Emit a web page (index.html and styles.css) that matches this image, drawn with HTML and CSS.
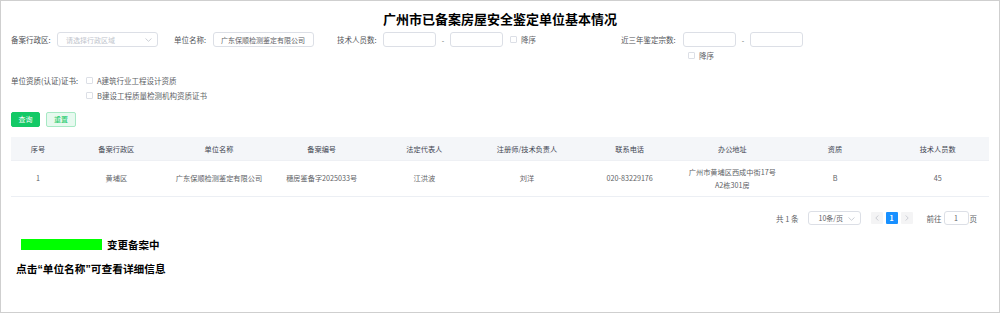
FILE: index.html
```html
<!DOCTYPE html>
<html lang="zh-CN">
<head>
<meta charset="utf-8">
<title>广州市已备案房屋安全鉴定单位基本情况</title>
<link rel="stylesheet" href="styles.css">
</head>
<body>
<div class="frame">
  <h1 class="title">广州市已备案房屋安全鉴定单位基本情况</h1>

  <div class="row1">
    <div class="item item-area">
      <span class="label w46">备案行政区:</span>
      <div class="select w101">
        <span class="placeholder">请选择行政区域</span>
        <svg class="chev" width="7" height="4" viewBox="0 0 7 4"><polyline points="0.5,0.5 3.5,3.3 6.5,0.5" fill="none" stroke="#c0c4cc" stroke-width="0.8"/></svg>
      </div>
    </div>
    <div class="item item-name">
      <span class="label w39">单位名称:</span>
      <div class="input w101"><span class="val">广东保顺检测鉴定有限公司</span></div>
    </div>
    <div class="item item-staff">
      <span class="label w46">技术人员数:</span>
      <div class="input w53"></div>
      <span class="dash">-</span>
      <div class="input w53"></div>
      <span class="check ml7"></span>
      <span class="opt">降序</span>
    </div>
    <div class="item-col">
      <div class="item">
        <span class="label w62">近三年鉴定宗数:</span>
        <div class="input w53"></div>
        <span class="dash">-</span>
        <div class="input w53"></div>
      </div>
      <div class="subline">
        <span class="check"></span>
        <span class="opt">降序</span>
      </div>
    </div>
  </div>

  <div class="row2">
    <span class="label w75">单位资质(认证)证书:</span>
    <div class="opts">
      <div class="optline"><span class="check"></span><span class="opt">A建筑行业工程设计资质</span></div>
      <div class="optline"><span class="check"></span><span class="opt">B建设工程质量检测机构资质证书</span></div>
    </div>
  </div>

  <div class="buttons">
    <button class="btn btn-primary">查询</button>
    <button class="btn btn-plain">重置</button>
  </div>

  <div class="table">
    <div class="tr th">
      <div>序号</div><div>备案行政区</div><div>单位名称</div><div>备案编号</div><div>法定代表人</div><div>注册师/技术负责人</div><div>联系电话</div><div>办公地址</div><div>资质</div><div>技术人员数</div>
    </div>
    <div class="tr td">
      <div>1</div><div>黄埔区</div><div>广东保顺检测鉴定有限公司</div><div>穗房鉴备字2025033号</div><div>江洪波</div><div>刘洋</div><div>020-83229176</div><div>广州市黄埔区西成中街17号<br>A2栋301房</div><div>B</div><div>45</div>
    </div>
  </div>

  <div class="pager">
    <span class="total">共 1 条</span>
    <div class="select psize"><span class="pval">10条/页</span>
      <svg class="chev" width="7" height="4" viewBox="0 0 7 4"><polyline points="0.5,0.5 3.5,3.3 6.5,0.5" fill="none" stroke="#c0c4cc" stroke-width="0.8"/></svg>
    </div>
    <span class="pbtn"><svg width="4" height="6" viewBox="0 0 4 6"><polyline points="3.3,0.5 0.8,3 3.3,5.5" fill="none" stroke="#c0c4cc" stroke-width="0.8"/></svg></span>
    <span class="pbtn active">1</span>
    <span class="pbtn"><svg width="4" height="6" viewBox="0 0 4 6"><polyline points="0.7,0.5 3.2,3 0.7,5.5" fill="none" stroke="#c0c4cc" stroke-width="0.8"/></svg></span>
    <span class="goto">前往</span>
    <div class="input pjump"><span>1</span></div>
    <span class="page">页</span>
  </div>

  <div class="legend">
    <span class="bar"></span>
    <span class="legend-text">变更备案中</span>
  </div>
  <p class="hint">点击<span class="q">“</span>单位名称<span class="q">”</span>可查看详细信息</p>
</div>
</body>
</html>
```

FILE: styles.css
```css
* { box-sizing: border-box; }
html, body { margin: 0; padding: 0; background: #fff; }
body {
  font-family: "Noto Sans CJK SC", "Noto Sans", sans-serif;
  color: #606266;
}
.frame {
  width: 1000px;
  height: 313px;
  border: 1px solid #cfcfcf;
  padding: 10px 10px 0 10px;
  overflow: hidden;
}
.title {
  margin: 0;
  font-size: 13px;
  line-height: 16px;
  font-weight: bold;
  color: #000;
  text-align: center;
}
.row1 {
  display: flex;
  align-items: flex-start;
  margin-top: 5px;
}
.item {
  display: flex;
  align-items: center;
  height: 15px;
}
.item-area { margin-right: 16px; }
.item-name { margin-right: 23px; }
.item-staff { margin-right: 85px; }
.item-col { display: flex; flex-direction: column; }
.subline {
  display: flex;
  align-items: center;
  height: 12px;
  margin-top: 2px;
  padding-left: 67px;
}
.label {
  font-size: 7.5px;
  line-height: 15px;
  color: #505257;
  white-space: nowrap;
}
.w39 { width: 39px; }
.w46 { width: 46px; }
.w62 { width: 62px; }
.w75 { width: 75px; }
.w53 { width: 53px; }
.w101 { width: 101px; }
.select, .input {
  position: relative;
  height: 15px;
  border: 1px solid #dcdfe6;
  border-radius: 3px;
  display: flex;
  align-items: center;
  background: #fff;
}
.placeholder {
  font-size: 7px;
  color: #c0c4cc;
  padding-left: 8px;
  white-space: nowrap;
}
.val {
  font-size: 7px;
  color: #606266;
  padding-left: 7px;
  white-space: nowrap;
}
.chev { position: absolute; right: 5px; top: 5px; }
.dash {
  width: 14px;
  text-align: center;
  font-size: 7px;
  color: #606266;
}
.check {
  display: inline-block;
  width: 7px;
  height: 7px;
  border: 1px solid #dcdfe6;
  border-radius: 1px;
  background: #fff;
}
.ml7 { margin-left: 7px; }
.opt {
  font-size: 7.5px;
  color: #606266;
  margin-left: 4px;
  white-space: nowrap;
}
.row2 {
  display: flex;
  align-items: flex-start;
  margin-top: 12px;
}
.optline {
  display: flex;
  align-items: center;
  height: 15px;
}
.optline .opt { margin-left: 4px; }
.buttons {
  display: flex;
  gap: 6px;
  margin-top: 9px;
}
.btn {
  width: 30px;
  height: 15px;
  padding: 0;
  font-family: inherit;
  font-size: 7px;
  line-height: 13px;
  border-radius: 2px;
  border: 1px solid transparent;
}
.btn-primary { background: #13c966; border-color: #13c966; color: #fff; width: 29px; }
.btn-plain { background: #e7f9ef; border-color: #a6e9c4; color: #13c966; }
.table {
  margin-top: 10px;
  width: 978px;
}
.tr {
  display: grid;
  grid-template-columns: 54px repeat(9, 1fr);
  align-items: center;
  text-align: center;
}
.th {
  height: 24px;
  background: #f4f6f9;
  font-size: 7.2px;
  color: #3f4551;
  border-bottom: 1px solid #eef0f4;
}
.td {
  height: 36px;
  font-size: 7.2px;
  line-height: 13px;
  color: #606266;
  border-bottom: 1px solid #eceff4;
}
.pager {
  display: flex;
  align-items: center;
  justify-content: flex-end;
  height: 14px;
  margin-top: 14px;
  width: 966px;
  font-size: 7.5px;
  color: #606266;
}
.total { margin-right: 9px; white-space: nowrap; }
.psize { width: 53px; height: 14px; margin-right: 10px; }
.psize .chev { top: 5px; }
.pval { font-size: 7px; padding-left: 10px; color: #606266; }
.pbtn {
  width: 12px;
  height: 12px;
  background: #f4f4f5;
  border-radius: 1px;
  display: flex;
  align-items: center;
  justify-content: center;
  font-size: 7px;
  font-weight: bold;
  color: #606266;
}
.pbtn + .pbtn { margin-left: 3px; }
.pbtn.active { background: #1890ff; color: #fff; }
.goto { margin-left: 14px; margin-right: 2px; }
.pjump { width: 25px; height: 14px; justify-content: center; font-size: 7px; }
.page { margin-left: 1px; }
.legend {
  display: flex;
  align-items: center;
  height: 11px;
  margin-top: 14px;
  padding-left: 10px;
}
.bar {
  width: 81px;
  height: 11px;
  background: #00ff00;
}
.legend-text {
  margin-left: 5px;
  font-size: 10.5px;
  font-weight: bold;
  color: #000;
  white-space: nowrap;
}
.hint {
  margin: 12px 0 0 5px;
  font-size: 10.7px;
  line-height: 14px;
  font-weight: bold;
  color: #000;
}
.hint .q {
  font-family: "Liberation Sans", sans-serif;
}
```
